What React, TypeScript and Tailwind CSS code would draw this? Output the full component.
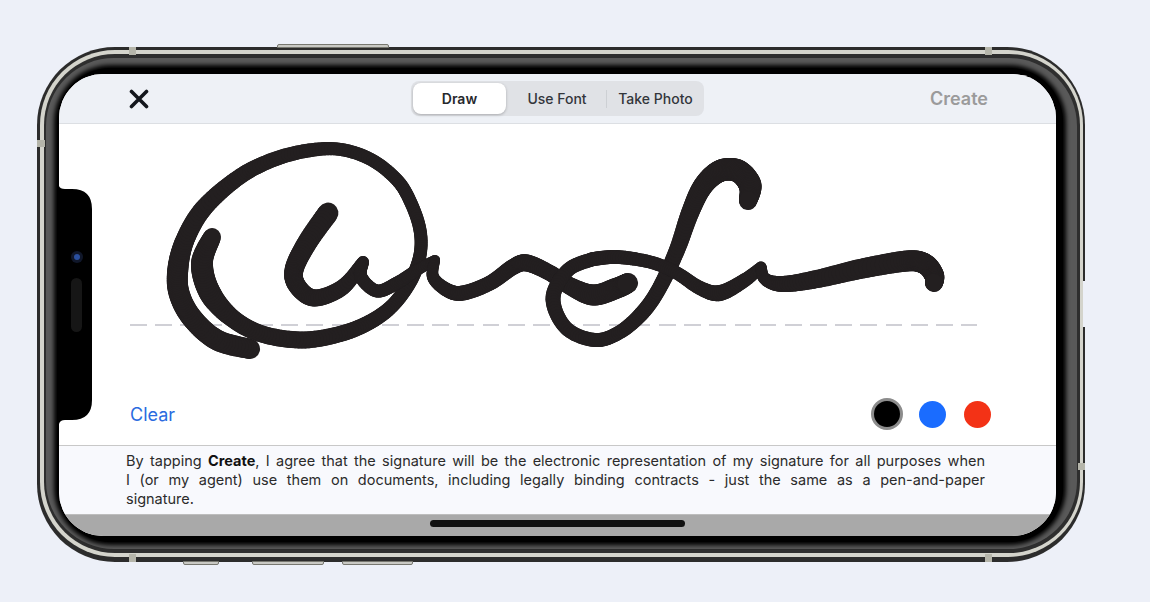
import React from "react";

type Pt = [number, number, number];

// Variable-width pen stroke: samples a Catmull-Rom curve through [x, y, width]
const Stroke = ({ pts }: { pts: Pt[] }) => {
  const samples: Pt[] = [];
  for (let i = 0; i < pts.length - 1; i++) {
    const p0 = pts[Math.max(i - 1, 0)];
    const p1 = pts[i];
    const p2 = pts[i + 1];
    const p3 = pts[Math.min(i + 2, pts.length - 1)];
    for (let s = 0; s < 12; s++) {
      const t = s / 12;
      const at = (k: number) =>
        0.5 *
        (2 * p1[k] +
          (p2[k] - p0[k]) * t +
          (2 * p0[k] - 5 * p1[k] + 4 * p2[k] - p3[k]) * t * t +
          (3 * p1[k] - p0[k] - 3 * p2[k] + p3[k]) * t * t * t);
      samples.push([at(0), at(1), p1[2] + (p2[2] - p1[2]) * t]);
    }
  }
  samples.push(pts[pts.length - 1]);
  return (
    <g stroke="#231f20" strokeLinecap="round" fill="none">
      {samples.slice(1).map((p, i) => (
        <line
          key={i}
          x1={samples[i][0]}
          y1={samples[i][1]}
          x2={p[0]}
          y2={p[1]}
          strokeWidth={p[2]}
        />
      ))}
    </g>
  );
};

const strokes: Pt[][] = [
  // big oval, ending in the thick inner left stroke
  [
    [250, 349, 20], [217, 340, 21], [192, 318, 21], [179, 293, 21], [178, 268, 21],
    [185, 240, 19], [203, 209, 18], [235, 180, 16], [265, 163, 15], [300, 152, 14],
    [337, 149, 13], [370, 159, 13], [397, 180, 13], [411, 203, 13], [420, 230, 13],
    [420, 255, 13], [411, 280, 14], [393, 305, 14], [370, 322, 15], [340, 334, 16],
    [302, 340, 17], [262, 334, 17], [232, 318, 18], [210, 293, 22], [202, 263, 22], [212, 237, 18],
  ],
  // the u
  [
    [328, 213, 21], [307, 243, 20], [294, 270, 19], [298, 287, 18],
    [315, 298, 17], [343, 287, 16], [363, 262, 12],
  ],
  [[363, 262, 12], [361, 277, 13], [377, 291, 13], [397, 283, 13], [417, 270, 12], [435, 260, 10]],
  // wave into the short hook
  [
    [435, 260, 10], [433, 277, 12], [447, 290, 14], [463, 293, 15], [490, 283, 15],
    [513, 267, 16], [527, 263, 17], [550, 273, 16], [568, 285, 17], [593, 295, 21],
    [617, 288, 21], [628, 283, 20],
  ],
  // loop and tall f
  [
    [593, 259, 14], [568, 270, 14], [553, 298, 15], [566, 328, 14],
    [595, 340, 14], [620, 332, 14], [643, 312, 15], [660, 287, 15], [677, 250, 16],
    [690, 213, 18], [703, 186, 20], [720, 171, 22], [738, 171, 23], [750, 185, 23], [748, 201, 18],
  ],
  // top of the loop running into the tail
  [
    [593, 259, 14], [617, 257, 14], [650, 262, 13], [675, 272, 13], [700, 288, 14],
    [720, 293, 16], [745, 280, 14], [761, 267, 11],
  ],
  [
    [761, 267, 11], [765, 279, 12], [783, 284, 16], [817, 279, 18], [860, 269, 20],
    [907, 261, 21], [925, 264, 21], [934, 275, 20], [934, 283, 18],
  ],
];

const bands = [
  "left-[92px] top-0 h-[8px] w-[7px]",
  "left-[948px] top-0 h-[8px] w-[7px]",
  "left-[92px] bottom-0 h-[8px] w-[7px]",
  "left-[948px] bottom-0 h-[8px] w-[7px]",
  "left-0 top-[93px] h-[7px] w-[8px]",
  "right-0 top-[416px] h-[7px] w-[7px]",
];

const SideButton = ({ className }: { className: string }) => (
  <div className={`absolute h-[4px] bg-[#c9c9c4] border border-[#77776f] ${className}`} />
);

const App = () => {
  return (
    <div className="w-[1150px] h-[602px] bg-[#edf0f8] pl-[37px] pt-[47px] overflow-hidden font-['Inter',sans-serif]">
      <div className="relative w-[1048px] h-[515px]">
        <SideButton className="left-[240px] -top-[3px] w-[112px] rounded-t-[2px]" />
        <SideButton className="left-[146px] -bottom-[3px] w-[36px] rounded-b-[2px]" />
        <SideButton className="left-[215px] -bottom-[3px] w-[72px] rounded-b-[2px]" />
        <SideButton className="left-[305px] -bottom-[3px] w-[71px] rounded-b-[2px]" />

        {/* metal frame, one layer inside the other */}
        <div className="h-full rounded-[78px] bg-[#2c2c2c] pl-[3px] pr-[2px] pt-[3px] pb-[5px]">
          <div className="h-full rounded-[75px] bg-[#d4d4cc] pl-[4px] pr-[3px] pt-[4px] pb-[4px]">
            <div className="h-full rounded-[71px] bg-[#2e2e2e] pl-[2px] pr-[3px] pt-[4px] pb-[4px]">
              <div className="h-full rounded-[68px] bg-[#595959] pl-[11px] pr-[14px] pt-[10px] pb-[7px]">
                <div className="h-full rounded-[54px] bg-black shadow-[0_0_4px_3px_#000] pl-[2px] pr-[7px] pt-[6px] pb-[6px]">
                  <div className="relative h-full rounded-[44px] overflow-hidden bg-white flex flex-col">
                    <div className="h-[50px] shrink-0 bg-[#eef1f6] border-b border-[#dcdfe3] grid grid-cols-[1fr_auto_1fr] items-center px-[69px]">
                      <svg width="20" height="20" viewBox="0 0 20 20" className="ml-[1px] text-[#14171d]">
                        <path d="M2.5 2.5 17.5 17.5M17.5 2.5 2.5 17.5" stroke="currentColor" strokeWidth="3.6" strokeLinecap="round" />
                      </svg>
                      <div className="flex items-center w-[293px] h-[35px] rounded-[8px] bg-[#e0e2e6] p-[2px] text-[14px] text-[#33363b] font-medium">
                        <div className="w-[93px] h-[31px] flex items-center justify-center rounded-[8px] bg-white shadow-[0_1px_3px_rgba(0,0,0,0.25)] font-semibold text-[#26282c]">
                          Draw
                        </div>
                        <div className="w-[102px] text-center">Use Font</div>
                        <div className="w-px h-[18px] -ml-[2px] bg-[#cdd0d4]" />
                        <div className="flex-1 text-center pl-[2px]">Take Photo</div>
                      </div>
                      <div className="text-right text-[18px] font-semibold text-[#9b9b9b] -mr-[1px]">Create</div>
                    </div>

                    <div className="relative flex-1 bg-white flex flex-col pl-[71px] pr-[65.5px]">
                      <div className="flex gap-[8.5px] mt-[199.5px] w-[847px] overflow-hidden">
                        {Array.from({ length: 35 }, (_, i) => (
                          <div key={i} className="w-[16.7px] h-[2.5px] shrink-0 bg-[#d0d0d6]" />
                        ))}
                      </div>
                      <svg
                        className="absolute left-0 top-0"
                        width="997"
                        height="321"
                        viewBox="59 124 997 321"
                      >
                        {strokes.map((pts, i) => (
                          <Stroke key={i} pts={pts} />
                        ))}
                      </svg>
                      <div className="flex items-center justify-between mt-[72px]">
                        <span className="text-[18px] text-[#2a6be0]">Clear</span>
                        <div className="flex items-center gap-[18px]">
                          <div className="w-[32px] h-[32px] -mr-[2.5px] rounded-full bg-black border-[3px] border-[#8c8c8c]" />
                          <div className="w-[27px] h-[27px] rounded-full bg-[#1a6cff]" />
                          <div className="w-[27px] h-[27px] rounded-full bg-[#f33216]" />
                        </div>
                      </div>
                    </div>

                    <div className="h-[69px] shrink-0 bg-[#f8f9fd] border-t border-[#c8c8c8] pl-[67px] pr-[71px] pt-[4.5px] text-[14.5px] leading-[19px] text-[#2b2b2b]">
                      <div className="text-justify [text-align-last:justify]">
                        By tapping <b className="font-bold text-[#111]">Create</b>, I agree that the signature will be the electronic representation of my signature for all purposes when
                      </div>
                      <div className="text-justify [text-align-last:justify]">
                        I (or my agent) use them on documents, including legally binding contracts - just the same as a pen-and-paper
                      </div>
                      <div>signature.</div>
                    </div>

                    <div className="h-[22px] shrink-0 bg-[#a9a9a9] border-t border-[#bdbdbd] flex justify-center pt-[5px]">
                      <div className="w-[255px] h-[7px] rounded-full bg-[#111]" />
                    </div>

                    {/* sensor housing */}
                    <svg className="absolute left-0 top-[112px]" width="34" height="238" viewBox="0 0 34 238">
                      <path d="M0 0Q1 3 6 3L13 3Q33 3 33 23L33 214Q33 234 13 234L6 234Q1 234 0 238Z" fill="#000" />
                      <circle cx="18" cy="71" r="6" fill="#10172a" />
                      <circle cx="18" cy="71" r="3" fill="#2a4f9e" />
                      <rect x="12" y="92" width="11" height="54" rx="5.5" fill="#161616" />
                    </svg>
                  </div>
                </div>
              </div>
            </div>
          </div>
        </div>

        {bands.map((b) => (
          <div key={b} className={`absolute bg-[#b5b5aa] ${b}`} />
        ))}
        <div className="absolute -right-[1px] top-[234px] w-[3px] h-[46px] bg-[#edf0f8]" />
      </div>
    </div>
  );
};

export default App;
